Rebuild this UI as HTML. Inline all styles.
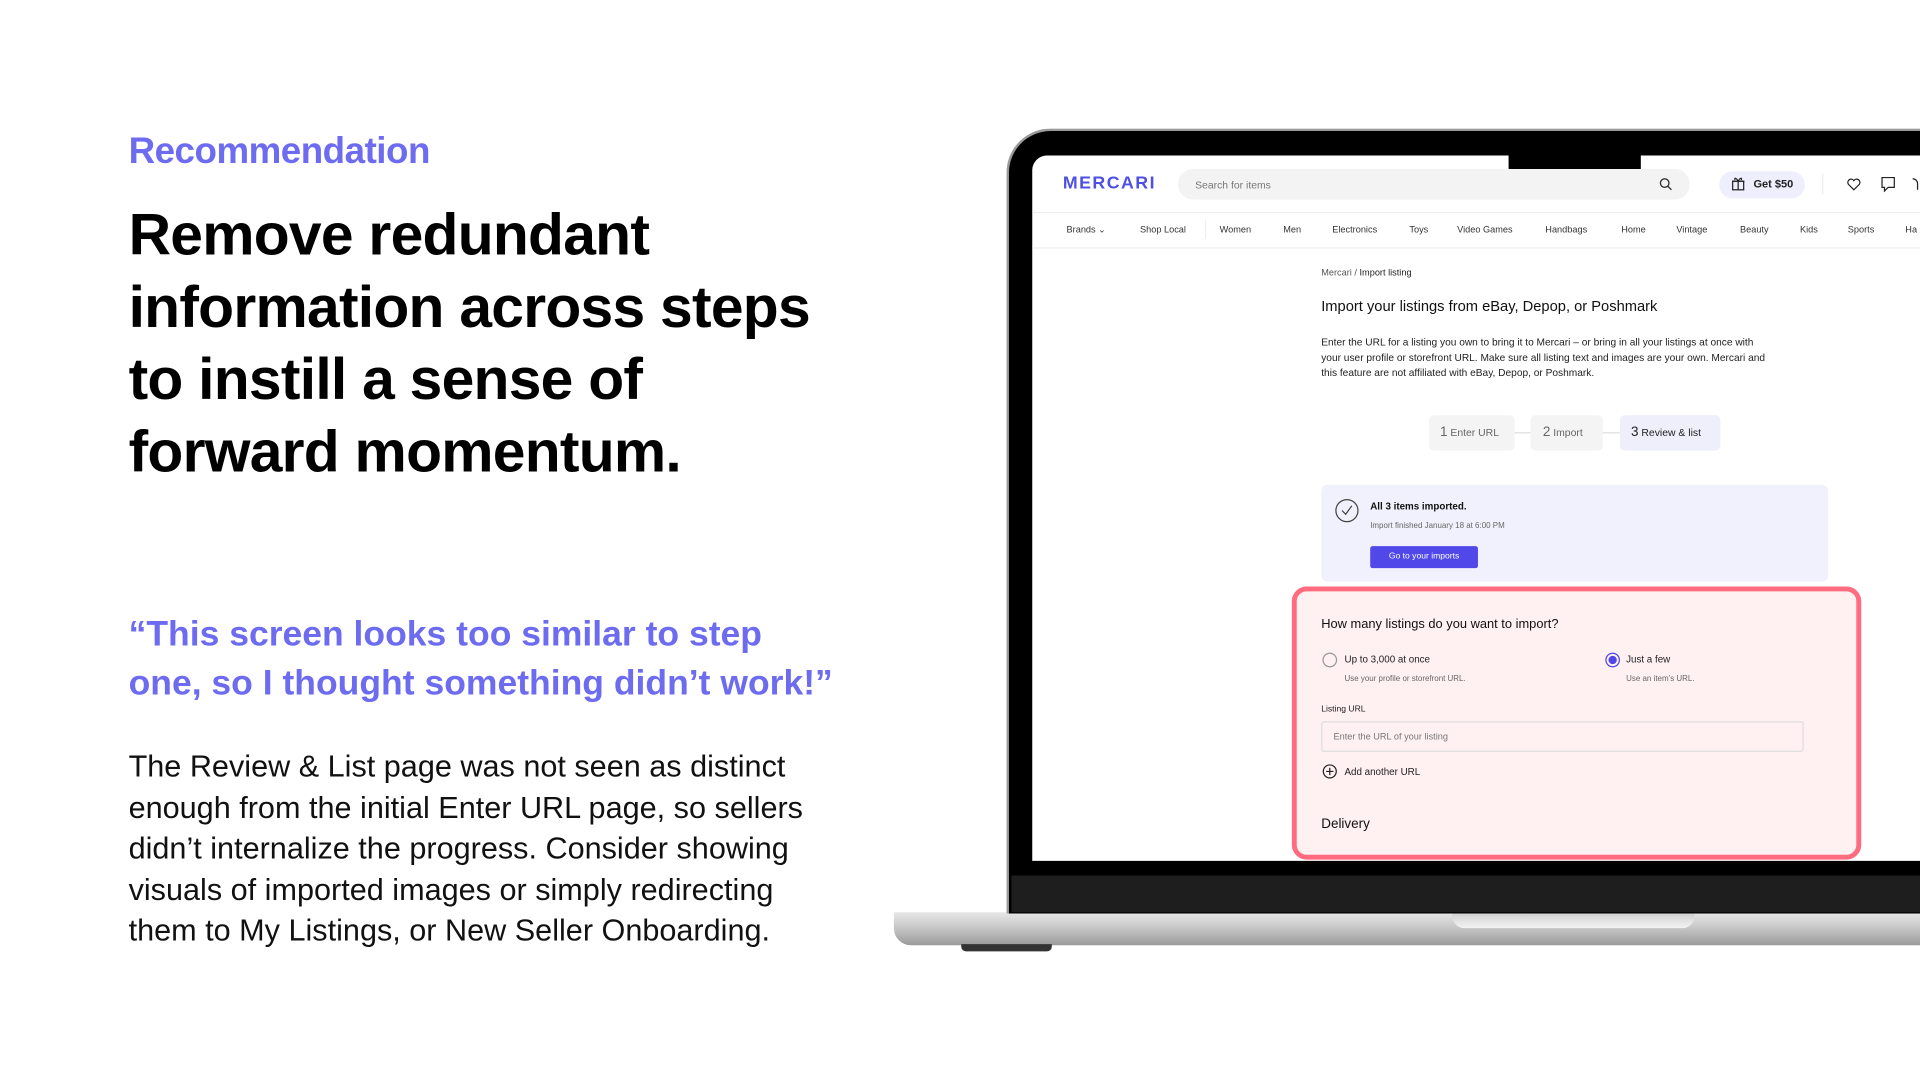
<!DOCTYPE html>
<html><head><meta charset="utf-8"><style>
*{margin:0;padding:0;box-sizing:border-box}
html,body{width:1920px;height:1080px;overflow:hidden;background:#fff;font-family:"Liberation Sans",sans-serif}
#w{position:absolute;left:0;top:0;width:1568px;height:882px;transform:scale(1.22449);transform-origin:0 0}
.a{position:absolute;white-space:nowrap}
.p{color:#6d6cf0}
.s{font-size:8px;color:#333}
</style></head><body><div id="w">
<div class="a p" style="left:105px;top:107px;font-size:30px;font-weight:bold;letter-spacing:-0.4px">Recommendation</div>
<div class="a" style="left:105px;top:163px;font-size:48px;font-weight:bold;line-height:59px;letter-spacing:-0.6px;color:#000">Remove redundant<br>information across steps<br>to instill a sense of<br>forward momentum.</div>
<div class="a p" style="left:105px;top:498px;font-size:29px;font-weight:bold;line-height:40px;letter-spacing:0px">“This screen looks too similar to step<br>one, so I thought something didn’t work!”</div>
<div class="a" style="left:105px;top:610px;font-size:25px;line-height:33.5px;color:#111">The Review &amp; List page was not seen as distinct<br>enough from the initial Enter URL page, so sellers<br>didn’t internalize the progress. Consider showing<br>visuals of imported images or simply redirecting<br>them to My Listings, or New Seller Onboarding.</div>

<!-- laptop -->
<div class="a" style="left:730px;top:745px;width:900px;height:27px;background:linear-gradient(#e8e8e8,#c4c4c4 50%,#9a9a9a);border-radius:0 0 0 14px"></div>
<div class="a" style="left:1186px;top:745px;width:198px;height:13px;background:linear-gradient(#cfcfcf,#f3f3f3);border-radius:0 0 10px 10px"></div>
<div class="a" style="left:785px;top:771px;width:74px;height:6px;background:#333;border-radius:0 0 4px 4px"></div>
<div class="a" style="left:822px;top:105px;width:800px;height:641px;background:#000;border-radius:36px 36px 0 0;border:2px solid #9a9a9a;border-bottom:none"></div>
<div class="a" style="left:826px;top:715px;width:800px;height:30px;background:#1e1e1e"></div>
<div class="a" style="left:843px;top:127px;width:780px;height:576px;background:#fff;border-radius:12px 0 0 0;overflow:hidden">
 <div style="position:absolute;left:0;top:0;width:780px;height:576px">
 <div class="a" style="left:389px;top:0;width:108px;height:19px;background:#000;border-radius:0 0 6px 6px"></div>
 <div class="a" style="left:25px;top:15px;font-size:14.5px;font-weight:bold;color:#4e50e3;letter-spacing:1.2px">MERCARI</div>
 <div class="a" style="left:119px;top:11px;width:418px;height:25px;background:#f3f3f4;border-radius:13px"></div>
 <div class="a s" style="left:133px;top:19px;color:#777;font-size:8.5px">Search for items</div>
 <svg class="a" style="left:512px;top:18px" width="11" height="11" viewBox="0 0 11 11"><circle cx="4.5" cy="4.5" r="3.5" fill="none" stroke="#333" stroke-width="1.1"/><path d="M7 7l3 3" stroke="#333" stroke-width="1.1"/></svg>
 <div class="a" style="left:561px;top:13px;width:70px;height:22px;background:#eeeefc;border-radius:11px"></div>
 <svg class="a" style="left:571px;top:17px" width="11" height="12" viewBox="0 0 11 12"><rect x="1" y="4" width="9" height="7" fill="none" stroke="#222"/><path d="M0.5 4h10M5.5 4v7M5.5 4C4 1 2 1 3 3M5.5 4C7 1 9 1 8 3" stroke="#222" fill="none"/></svg>
 <div class="a" style="left:589px;top:18px;font-size:9px;font-weight:bold;color:#222">Get $50</div>
 <div class="a" style="left:645px;top:15px;width:1px;height:17px;background:#eee"></div>
 <svg class="a" style="left:665px;top:18px" width="12" height="11" viewBox="0 0 12 11"><path d="M6 10L1.5 5.5A2.5 2.5 0 0 1 6 2.5 2.5 2.5 0 0 1 10.5 5.5z" fill="none" stroke="#222"/></svg>
 <svg class="a" style="left:693px;top:17px" width="12" height="13" viewBox="0 0 12 13"><path d="M1 1h10v8H6l-3 3V9H1z" fill="none" stroke="#222"/></svg>
 <svg class="a" style="left:718px;top:17px" width="8" height="13" viewBox="0 0 8 13"><path d="M5 11V6a4 4 0 0 0-4-4" fill="none" stroke="#222"/></svg>
 <div class="a" style="left:0;top:46px;width:780px;height:1px;background:#eee"></div>
 <div class="a s" style="left:28px;top:56px;font-size:7.5px">Brands ⌄</div>
 <div class="a s" style="left:88px;top:56px;font-size:7.5px">Shop Local</div>
 <div class="a" style="left:141px;top:53px;width:1px;height:15px;background:#eee"></div>
 <div class="a s" style="left:153px;top:56px;font-size:7.5px">Women</div>
 <div class="a s" style="left:205px;top:56px;font-size:7.5px">Men</div>
 <div class="a s" style="left:245px;top:56px;font-size:7.5px">Electronics</div>
 <div class="a s" style="left:308px;top:56px;font-size:7.5px">Toys</div>
 <div class="a s" style="left:347px;top:56px;font-size:7.5px">Video Games</div>
 <div class="a s" style="left:419px;top:56px;font-size:7.5px">Handbags</div>
 <div class="a s" style="left:481px;top:56px;font-size:7.5px">Home</div>
 <div class="a s" style="left:526px;top:56px;font-size:7.5px">Vintage</div>
 <div class="a s" style="left:578px;top:56px;font-size:7.5px">Beauty</div>
 <div class="a s" style="left:627px;top:56px;font-size:7.5px">Kids</div>
 <div class="a s" style="left:666px;top:56px;font-size:7.5px">Sports</div>
 <div class="a s" style="left:713px;top:56px;font-size:7.5px">Ha</div>
 <div class="a" style="left:0;top:75px;width:780px;height:1px;background:#eee"></div>
 <div class="a s" style="left:236px;top:91px;font-size:7.5px;color:#555">Mercari / <span style="color:#222">Import listing</span></div>
 <div class="a" style="left:236px;top:116px;font-size:12px;color:#111">Import your listings from eBay, Depop, or Poshmark</div>
 <div class="a s" style="left:236px;top:146px;font-size:8.3px;line-height:12.5px;color:#222">Enter the URL for a listing you own to bring it to Mercari – or bring in all your listings at once with<br>your user profile or storefront URL. Make sure all listing text and images are your own. Mercari and<br>this feature are not affiliated with eBay, Depop, or Poshmark.</div>
 <div class="a" style="left:394px;top:226px;width:90px;height:1px;background:#ddd"></div>
 <div class="a" style="left:324px;top:212px;width:70px;height:29px;background:#f4f4f5;border-radius:4px"></div>
 <div class="a s" style="left:333px;top:220px;font-size:8.5px;color:#666"><span style="font-size:11px">1</span> Enter URL</div>
 <div class="a" style="left:407px;top:212px;width:59px;height:29px;background:#f4f4f5;border-radius:4px"></div>
 <div class="a s" style="left:417px;top:220px;font-size:8.5px;color:#666"><span style="font-size:11px">2</span> Import</div>
 <div class="a" style="left:480px;top:212px;width:82px;height:29px;background:#efeffc;border-radius:4px"></div>
 <div class="a s" style="left:489px;top:220px;font-size:8.5px;color:#222"><span style="font-size:11px">3</span> Review &amp; list</div>
 <div class="a" style="left:236px;top:269px;width:414px;height:79px;background:#f1f1fd;border-radius:5px"></div>
 <svg class="a" style="left:247px;top:280px" width="20" height="20" viewBox="0 0 20 20"><circle cx="10" cy="10" r="9" fill="none" stroke="#444" stroke-width="1"/><path d="M6 10l3 3 5-7" fill="none" stroke="#444"/></svg>
 <div class="a" style="left:276px;top:282px;font-size:8px;font-weight:bold;color:#111">All 3 items imported.</div>
 <div class="a" style="left:276px;top:299px;font-size:6.5px;color:#666">Import finished January 18 at 6:00 PM</div>
 <div class="a" style="left:276px;top:319px;width:88px;height:18px;background:#5048e8;border-radius:2px;color:#fff;font-size:7px;text-align:center;line-height:18px">Go to your imports</div>
 <div class="a" style="left:212px;top:352px;width:465px;height:223px;background:#fff0f1;border:4px solid #ff6b7f;border-radius:12px"></div>
 <div class="a" style="left:236px;top:377px;font-size:10.5px;color:#111">How many listings do you want to import?</div>
 <div class="a" style="left:237px;top:406px;width:12px;height:12px;border:1px solid #999;border-radius:50%"></div>
 <div class="a" style="left:255px;top:407px;font-size:8px;color:#222">Up to 3,000 at once</div>
 <div class="a" style="left:255px;top:424px;font-size:6.5px;color:#666">Use your profile or storefront URL.</div>
 <div class="a" style="left:468px;top:406px;width:12px;height:12px;border:1.2px solid #5048e8;border-radius:50%;background:radial-gradient(#5048e8 45%,transparent 50%)"></div>
 <div class="a" style="left:485px;top:407px;font-size:8px;color:#222">Just a few</div>
 <div class="a" style="left:485px;top:424px;font-size:6.5px;color:#666">Use an item’s URL.</div>
 <div class="a" style="left:236px;top:449px;font-size:7px;color:#222">Listing URL</div>
 <div class="a" style="left:236px;top:462px;width:394px;height:25px;background:#fff0f1;border:1px solid #ddd;border-radius:2px"></div>
 <div class="a" style="left:246px;top:470px;font-size:7.5px;color:#777">Enter the URL of your listing</div>
 <svg class="a" style="left:237px;top:497px" width="12" height="12" viewBox="0 0 12 12"><circle cx="6" cy="6" r="5.3" fill="none" stroke="#222"/><path d="M6 3v6M3 6h6" stroke="#222"/></svg>
 <div class="a" style="left:255px;top:499px;font-size:8px;color:#222">Add another URL</div>
 <div class="a" style="left:236px;top:540px;font-size:11px;color:#111">Delivery</div>
 </div>
</div>
</div></body></html>
